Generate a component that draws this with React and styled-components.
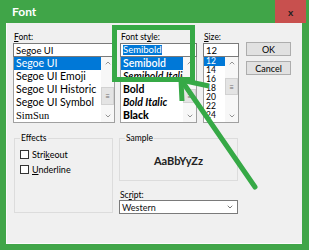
import React from 'react';
import styled, { createGlobalStyle } from 'styled-components';
import { ChevronUp, ChevronDown } from 'lucide-react';

const FRAME = '#40a548';
const MARK = '#36a946';
const UI_FONT = 'Lato, "Noto Sans", sans-serif';

const GlobalStyle = createGlobalStyle`
    html, body {
        margin: 0;
        padding: 0;
        background: #ffffff;
    }
    body {
        font-family: ${UI_FONT};
        color: #000;
    }
    * {
        box-sizing: border-box;
    }
`;

const Window = styled.div`
    position: relative;
    width: 309px;
    height: 250px;
    background: ${FRAME};
    display: flex;
    flex-direction: column;
    overflow: hidden;
`;

const TitleBar = styled.div`
    height: 23px;
    flex: none;
    display: flex;
    align-items: center;
    justify-content: space-between;
    padding: 0 3px 0 12px;
`;

const Title = styled.span`
    color: #ffffff;
    font-size: 12px;
    font-weight: 700;
`;

const CloseButton = styled.div`
    width: 31px;
    height: 23px;
    background: #c8504e;
    color: #1e1e1e;
    font-size: 10px;
    font-weight: 700;
    display: flex;
    align-items: center;
    justify-content: center;
`;

const Body = styled.div`
    flex: 1;
    margin: 0 7px 6px 6px;
    background: #f0f0f0;
    border-left: 1px solid #fbfbfb;
    border-bottom: 1px solid #fbfbfb;
    padding: 9px 0 0 6px;
`;

const TopRow = styled.div`
    display: flex;
    align-items: flex-start;
`;

const Column = styled.div`
    width: ${p => p.$width}px;
    margin-left: ${p => p.$gap || 0}px;
    display: flex;
    flex-direction: column;
`;

const Label = styled.div`
    height: 11px;
    line-height: 11px;
    font-size: 8.5px;
    padding-left: 1px;
    white-space: nowrap;
`;

const TextBox = styled.div`
    height: 14px;
    background: #ffffff;
    border: 1px solid #7a7a7a;
    font-size: 9.5px;
    padding: 0 2px;
    display: flex;
    align-items: center;
    white-space: nowrap;
    overflow: hidden;
`;

const Selected = styled.span`
    background: #0078d7;
    color: #ffffff;
    line-height: 10px;
`;

const ListBox = styled.div`
    height: 66px;
    background: #ffffff;
    border: 1px solid #a0a0a0;
    border-top: none;
    display: flex;
    overflow: hidden;
`;

const Items = styled.div`
    flex: 1;
    min-width: 0;
    display: flex;
    flex-direction: column;
    overflow: hidden;
`;

const Item = styled.div`
    flex: none;
    height: ${p => p.$h}px;
    line-height: ${p => p.$h}px;
    font-size: ${p => p.$size}px;
    font-weight: ${p => p.$weight || 400};
    font-style: ${p => (p.$italic ? 'italic' : 'normal')};
    font-family: ${p => p.$family || UI_FONT};
    padding-left: 2px;
    white-space: nowrap;
    overflow: hidden;
    background: ${p => (p.$selected ? '#0078d7' : 'transparent')};
    color: ${p => (p.$selected ? '#ffffff' : '#000000')};
`;

const ScrollBar = styled.div`
    width: 13px;
    flex: none;
    background: #f7f7f7;
    display: flex;
    flex-direction: column;
    align-items: center;
    color: #606060;
`;

const ScrollArrow = styled.div`
    height: 12px;
    width: 100%;
    flex: none;
    display: flex;
    align-items: center;
    justify-content: center;
`;

const Track = styled.div`
    flex: 1;
    width: 100%;
`;

const Thumb = styled.div`
    margin-top: ${p => p.$top}px;
    height: ${p => p.$height}px;
    width: 100%;
    background: #e4e4e4;
    border: 1px solid #d2d2d2;
    color: #707070;
    font-size: 8px;
    line-height: 1;
    display: flex;
    align-items: center;
    justify-content: center;
`;

const ButtonColumn = styled.div`
    width: 45px;
    margin-left: 7px;
    padding-top: 10px;
    display: flex;
    flex-direction: column;
    gap: 5px;
`;

const Button = styled.div`
    height: 14px;
    background: #e1e1e1;
    border: 1px solid #adadad;
    font-size: 9px;
    display: flex;
    align-items: center;
    justify-content: center;
`;

const BottomRow = styled.div`
    display: flex;
    align-items: flex-start;
    margin-top: 11px;
    padding-left: 1px;
`;

const Group = styled.fieldset`
    margin: 0;
    width: ${p => p.$width}px;
    height: ${p => p.$height}px;
    border: 1px solid #dcdcdc;
    padding: 0 5px;
    min-width: 0;
`;

const Legend = styled.legend`
    font-size: 8.5px;
    line-height: 9px;
    padding: 0 1px;
    margin-left: 0;
`;

const CheckRow = styled.div`
    display: flex;
    align-items: center;
    height: 15px;
    font-size: 9px;
    gap: 3px;
    &:first-of-type {
        margin-top: 4px;
    }
`;

const Box = styled.span`
    width: 9px;
    height: 9px;
    flex: none;
    background: #ffffff;
    border: 1px solid #333333;
`;

const RightColumn = styled.div`
    margin-left: 6px;
    width: 119px;
    display: flex;
    flex-direction: column;
`;

const SampleText = styled.div`
    height: 34px;
    display: flex;
    align-items: center;
    justify-content: center;
    font-size: 11px;
    font-weight: 700;
    color: #222;
`;

const SelectBox = styled(TextBox)`
    justify-content: space-between;
    font-size: 9px;
    color: #111;
    padding-right: 3px;
`;

const ScriptLabel = styled(Label)`
    margin-top: 9px;
    height: 10px;
`;

const Highlight = styled.div`
    position: absolute;
    left: 112px;
    top: 25px;
    width: 83px;
    height: 57px;
    border: 5px solid ${MARK};
    pointer-events: none;
`;

const ArrowLayer = styled.svg`
    position: absolute;
    left: 0;
    top: 0;
    pointer-events: none;
`;

function Scroller({ thumbTop, thumbHeight }) {
    return (
        <ScrollBar>
            <ScrollArrow><ChevronUp size={8} strokeWidth={2} /></ScrollArrow>
            <Track>
                <Thumb $top={thumbTop} $height={thumbHeight}>≡</Thumb>
            </Track>
            <ScrollArrow><ChevronDown size={8} strokeWidth={2} /></ScrollArrow>
        </ScrollBar>
    );
}

const fonts = [
    { name: 'Segoe UI', selected: true },
    { name: 'Segoe UI Emoji' },
    { name: 'Segoe UI Historic' },
    { name: 'Segoe UI Symbol' },
    { name: 'SimSun', family: '"Liberation Serif", serif' },
];

const styles = [
    { name: 'Semibold', weight: 600, selected: true },
    { name: 'Semibold Italic', weight: 600, italic: true },
    { name: 'Bold', weight: 700 },
    { name: 'Bold Italic', weight: 700, italic: true },
    { name: 'Black', weight: 900 },
];

const sizes = ['12', '14', '16', '18', '20', '22', '24'];

export default function App() {
    return (
        <>
            <GlobalStyle />
            <Window>
                <TitleBar>
                    <Title>Font</Title>
                    <CloseButton>x</CloseButton>
                </TitleBar>
                <Body>
                    <TopRow>
                        <Column $width={102}>
                            <Label><u>F</u>ont:</Label>
                            <TextBox>Segoe UI</TextBox>
                            <ListBox>
                                <Items>
                                    {fonts.map(f => (
                                        <Item key={f.name} $h={13} $size={10.5} $family={f.family} $selected={f.selected}>
                                            {f.name}
                                        </Item>
                                    ))}
                                </Items>
                                <Scroller thumbTop={18} thumbHeight={18} />
                            </ListBox>
                        </Column>
                        <Column $width={77} $gap={5}>
                            <Label>Font st<u>y</u>le:</Label>
                            <TextBox><Selected>Semibold</Selected></TextBox>
                            <ListBox>
                                <Items>
                                    {styles.map(s => (
                                        <Item
                                            key={s.name}
                                            $h={13}
                                            $size={10.5}
                                            $weight={s.weight}
                                            $italic={s.italic}
                                            $selected={s.selected}
                                        >
                                            {s.name}
                                        </Item>
                                    ))}
                                </Items>
                                <Scroller thumbTop={20} thumbHeight={14} />
                            </ListBox>
                        </Column>
                        <Column $width={36} $gap={6}>
                            <Label><u>S</u>ize:</Label>
                            <TextBox>12</TextBox>
                            <ListBox>
                                <Items>
                                    {sizes.map((s, i) => (
                                        <Item key={s} $h={9} $size={8.5} $selected={i === 0}>{s}</Item>
                                    ))}
                                </Items>
                                <Scroller thumbTop={9} thumbHeight={17} />
                            </ListBox>
                        </Column>
                        <ButtonColumn>
                            <Button>OK</Button>
                            <Button>Cancel</Button>
                        </ButtonColumn>
                    </TopRow>
                    <BottomRow>
                        <Group $width={99} $height={79}>
                            <Legend>Effects</Legend>
                            <CheckRow><Box /><span>Stri<u>k</u>eout</span></CheckRow>
                            <CheckRow><Box /><span><u>U</u>nderline</span></CheckRow>
                        </Group>
                        <RightColumn>
                            <Group $width={119} $height={47}>
                                <Legend>Sample</Legend>
                                <SampleText>AaBbYyZz</SampleText>
                            </Group>
                            <ScriptLabel>Sc<u>r</u>ipt:</ScriptLabel>
                            <SelectBox>
                                Western
                                <ChevronDown size={8} strokeWidth={2.2} color="#444" />
                            </SelectBox>
                        </RightColumn>
                    </BottomRow>
                </Body>
                <Highlight />
                <ArrowLayer width="309" height="250" viewBox="0 0 309 250">
                    <g stroke={MARK} strokeWidth="5" fill="none">
                        <line x1="184" y1="84" x2="255" y2="187" strokeLinecap="round" />
                        <polyline points="209,86 181,80 182,101" strokeLinejoin="miter" />
                    </g>
                </ArrowLayer>
            </Window>
        </>
    );
}
